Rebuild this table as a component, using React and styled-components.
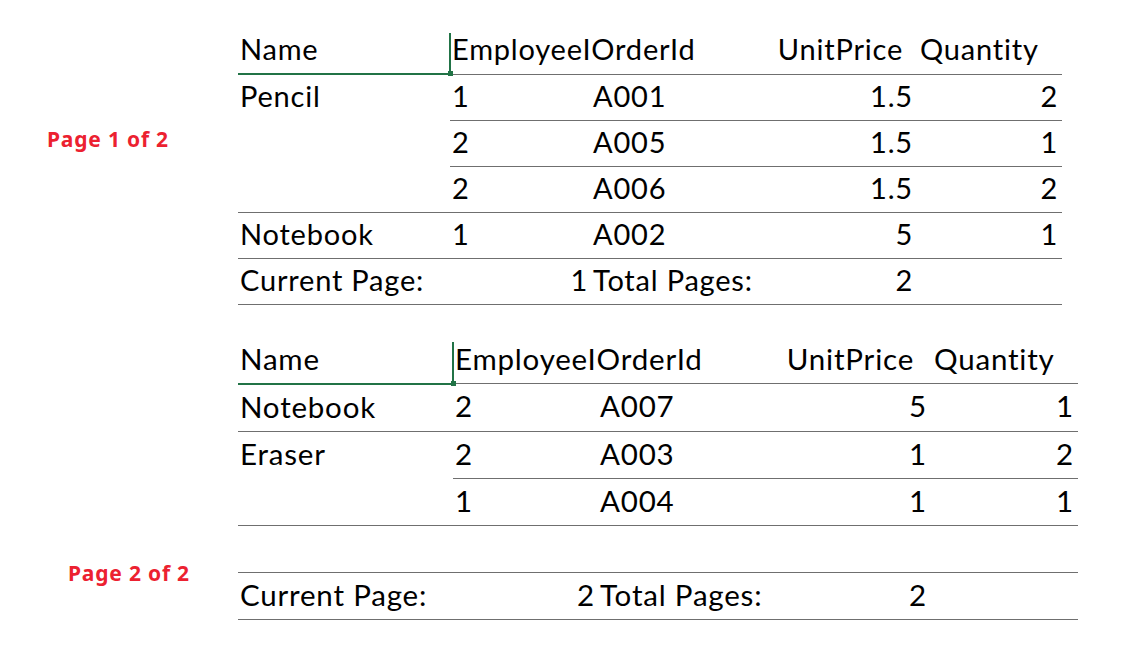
import React from "react";
import styled, { createGlobalStyle } from "styled-components";

const GlobalStyle = createGlobalStyle`
  html, body {
    margin: 0;
    padding: 0;
    background: #ffffff;
  }
  body {
    font-family: Lato, "Liberation Sans", sans-serif;
    color: #000;
  }
`;

const pages = [
  {
    label: "Page 1 of 2",
    labelTop: 98,
    labelLeft: 47,
    cols: [212, 140, 180, 147, 145],
    rowHeight: 46,
    fontSize: 29,
    priceHeadPad: 14,
    groups: [
      {
        name: "Pencil",
        rows: [
          ["1", "A001", "1.5", "2"],
          ["2", "A005", "1.5", "1"],
          ["2", "A006", "1.5", "2"],
        ],
      },
      { name: "Notebook", rows: [["1", "A002", "5", "1"]] },
    ],
    blankRow: false,
    current: 1,
    total: 2,
  },
  {
    label: "Page 2 of 2",
    labelTop: 223,
    labelLeft: 68,
    cols: [215, 144, 186, 148, 147],
    rowHeight: 47,
    fontSize: 29.5,
    priceHeadPad: 17,
    groups: [
      { name: "Notebook", rows: [["2", "A007", "5", "1"]] },
      {
        name: "Eraser",
        rows: [
          ["2", "A003", "1", "2"],
          ["1", "A004", "1", "1"],
        ],
      },
    ],
    blankRow: true,
    current: 2,
    total: 2,
  },
];

export default function App() {
  return (
    <Wrapper>
      <GlobalStyle />
      {pages.map((page) => (
        <Section key={page.label}>
          <PageLabel $top={page.labelTop} $left={page.labelLeft}>
            {page.label}
          </PageLabel>
          <ReportTable
            $width={page.cols.reduce((a, b) => a + b, 0)}
            $rowHeight={page.rowHeight}
            $fontSize={page.fontSize}
          >
            <colgroup>
              {page.cols.map((w, i) => (
                <col key={i} style={{ width: w }} />
              ))}
            </colgroup>
            <thead>
              <tr>
                <NameHead>Name</NameHead>
                <SelectedHead colSpan={2}>EmployeeIOrderId</SelectedHead>
                <Head $right $pad={page.priceHeadPad}>UnitPrice</Head>
                <Head $pad={3}>Quantity</Head>
              </tr>
            </thead>
            <tbody>
              {page.groups.map((group) =>
                group.rows.map((row, i) => (
                  <tr key={group.name + i}>
                    {i === 0 && <Cell rowSpan={group.rows.length}>{group.name}</Cell>}
                    <Cell>{row[0]}</Cell>
                    <Cell $pad={3}>{row[1]}</Cell>
                    <Cell $right>{row[2]}</Cell>
                    <Cell $right>{row[3]}</Cell>
                  </tr>
                ))
              )}
              {page.blankRow && (
                <tr>
                  <Cell colSpan={5} />
                </tr>
              )}
              <tr>
                <Cell>Current Page:</Cell>
                <Cell $right $pad={2}>{page.current}</Cell>
                <Cell $pad={3}>Total Pages:</Cell>
                <Cell $right>{page.total}</Cell>
                <Cell />
              </tr>
            </tbody>
          </ReportTable>
        </Section>
      ))}
    </Wrapper>
  );
}

const Wrapper = styled.div`
  display: flex;
  flex-direction: column;
  gap: 32px;
  padding-top: 28px;
  width: 1148px;
`;

const Section = styled.div`
  display: grid;
  grid-template-columns: 238px auto;
  align-items: start;
`;

const PageLabel = styled.div`
  padding-top: ${(p) => p.$top}px;
  padding-left: ${(p) => p.$left}px;
  font-family: "Noto Sans", "Open Sans", sans-serif;
  font-weight: 700;
  font-size: 21px;
  letter-spacing: 0.8px;
  line-height: 26px;
  color: #ec2130;
  white-space: nowrap;
`;

const ReportTable = styled.table`
  width: ${(p) => p.$width}px;
  table-layout: fixed;
  border-collapse: collapse;
  font-size: ${(p) => p.$fontSize}px;
  letter-spacing: 0.8px;

  th,
  td {
    height: ${(p) => p.$rowHeight - 1}px;
    line-height: ${(p) => p.$rowHeight - 4}px;
    padding: 0;
    white-space: nowrap;
    overflow: visible;
    vertical-align: top;
  }
`;

const Head = styled.th`
  font-weight: 400;
  text-align: ${(p) => (p.$right ? "right" : "left")};
  padding-left: ${(p) => (p.$right ? 0 : p.$pad)}px !important;
  padding-right: ${(p) => (p.$right ? p.$pad : 0)}px !important;
  border-bottom: 1px solid #6f6f6f;
`;

const NameHead = styled.th`
  font-weight: 400;
  text-align: left;
  padding-left: 2px !important;
  border-bottom: 2px solid #217346;
  position: relative;

  &::after {
    content: "";
    position: absolute;
    right: -3px;
    bottom: -3px;
    width: 5px;
    height: 5px;
    background: #217346;
  }
`;

const SelectedHead = styled.th`
  font-weight: 400;
  text-align: left;
  padding-left: 2px !important;
  border-bottom: 1px solid #6f6f6f;
  position: relative;

  &::before {
    content: "";
    position: absolute;
    left: -1px;
    top: 5px;
    bottom: 0;
    width: 2px;
    background: #217346;
  }
`;

const Cell = styled.td`
  text-align: ${(p) => (p.$right ? "right" : "left")};
  padding-left: ${(p) => (p.$right ? 0 : p.$pad || 2)}px !important;
  padding-right: ${(p) => (p.$right ? p.$pad || 4 : 0)}px !important;
  border-bottom: 1px solid #6f6f6f;
`;
